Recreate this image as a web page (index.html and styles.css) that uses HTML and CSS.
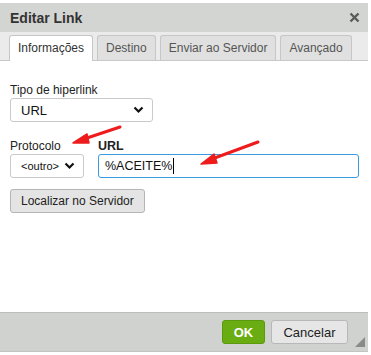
FILE: index.html
```html
<!DOCTYPE html>
<html lang="pt">
<head>
  <meta charset="UTF-8" />
  <title>Editar Link</title>
  <link rel="stylesheet" href="styles.css">
</head>
<body>
  <div class="dialog">
    <div class="title">
      <span>Editar Link</span>
      <svg class="close" width="11" height="11" viewBox="0 0 11 11"><path d="M1.5 1.5L9.5 9.5M9.5 1.5L1.5 9.5" stroke="#5a5a5a" stroke-width="2.4"/></svg>
    </div>
    <div class="tabs">
      <div class="tab active">Informações</div>
      <div class="tab">Destino</div>
      <div class="tab">Enviar ao Servidor</div>
      <div class="tab">Avançado</div>
    </div>
    <div class="content">
      <label class="lbl">Tipo de hiperlink</label>
      <div class="select wide">
        <span>URL</span>
        <svg width="11" height="8" viewBox="0 0 11 8"><path d="M1.5 1.5L5.5 5.5L9.5 1.5" fill="none" stroke="#111" stroke-width="2.2"/></svg>
      </div>
      <div class="row">
        <div class="col">
          <label class="lbl">Protocolo</label>
          <div class="select small">
            <span>&lt;outro&gt;</span>
            <svg width="11" height="8" viewBox="0 0 11 8"><path d="M1.5 1.5L5.5 5.5L9.5 1.5" fill="none" stroke="#111" stroke-width="2.2"/></svg>
          </div>
        </div>
        <div class="col grow">
          <label class="lbl bold">URL</label>
          <div class="input">%ACEITE%<span class="caret"></span></div>
        </div>
      </div>
      <button class="btn">Localizar no Servidor</button>
    </div>
    <div class="footer">
      <button class="ok">OK</button>
      <button class="cancel">Cancelar</button>
      <svg class="grip" width="10" height="10" viewBox="0 0 10 10"><path d="M10 0L10 10L0 10Z" fill="#8a8a8a"/></svg>
    </div>
  </div>

  <svg class="arrows" width="371" height="355" viewBox="0 0 371 355">
    <path d="M120 127L84 139" stroke="#ee1c1c" stroke-width="3" stroke-linecap="round"/>
    <path d="M73 143L87 134L89 143Z" fill="#ee1c1c" stroke="#ee1c1c" stroke-width="1.5" stroke-linejoin="round"/>
    <path d="M258 142L212 159" stroke="#ee1c1c" stroke-width="3" stroke-linecap="round"/>
    <path d="M201 164L214 154L217 163Z" fill="#ee1c1c" stroke="#ee1c1c" stroke-width="1.5" stroke-linejoin="round"/>
  </svg>
</body>
</html>
```

FILE: styles.css
```css
body {
  margin: 0;
  background: #fff;
  font-family: 'Liberation Sans', Arial, sans-serif;
  font-size: 12px;
  color: #222;
  position: relative;
}
.dialog {
  margin-top: 3px;
  width: 368px;
  height: 349px;
  display: flex;
  flex-direction: column;
  background: #fff;
}
.title {
  height: 29px;
  background: #d3d5d2;
  display: flex;
  align-items: center;
  justify-content: space-between;
  padding: 0 10px;
  font-size: 14px;
  font-weight: bold;
  color: #333;
}
.close {
  margin-right: -2px;
}
.tabs {
  height: 28px;
  background: #ebebeb;
  border-bottom: 1px solid #c9c9c9;
  display: flex;
  align-items: flex-end;
  padding-left: 9px;
  gap: 4px;
}
.tab {
  height: 24px;
  line-height: 24px;
  padding: 0 8px;
  white-space: nowrap;
  background: #e0e0e0;
  border: 1px solid #c6c6c6;
  border-bottom: none;
  border-radius: 3px 3px 0 0;
  color: #555;
  font-size: 12px;
}
.tab.active {
  background: #fff;
  color: #333;
  height: 25px;
  margin-bottom: -1px;
}
.content {
  flex: 1;
  padding: 22px 10px 0;
  display: flex;
  flex-direction: column;
  align-items: flex-start;
}
.lbl {
  display: block;
  font-size: 12px;
  color: #222;
  height: 14px;
  margin-bottom: 1px;
}
.lbl.bold {
  font-weight: bold;
  font-size: 12.5px;
}
.select {
  box-sizing: border-box;
  height: 24px;
  border: 1px solid #cacaca;
  border-radius: 3px;
  display: flex;
  align-items: center;
  justify-content: space-between;
  padding: 0 8px 0 10px;
  color: #111;
  font-size: 13px;
  background: #fff;
}
.select.wide {
  width: 143px;
}
.select.small {
  width: 74px;
  font-size: 11px;
}
.row {
  display: flex;
  gap: 14px;
  width: 349px;
  margin-top: 17px;
}
.col.grow {
  flex: 1;
}
.input {
  box-sizing: border-box;
  height: 24px;
  border: 1px solid #3a9be2;
  border-radius: 3px;
  padding: 0 6px;
  display: flex;
  align-items: center;
  font-size: 12.5px;
  color: #111;
}
.caret {
  width: 1px;
  height: 16px;
  background: #000;
  margin-left: 1px;
}
.btn {
  margin-top: 11px;
  height: 24px;
  padding: 0 10px;
  background: #e4e4e4;
  border: 1px solid #b5b5b5;
  border-radius: 3px;
  font-family: inherit;
  font-size: 12px;
  color: #222;
}
.footer {
  height: 38px;
  background: #d0d2cf;
  border-top: 1px solid #bdbdbd;
  border-bottom: 1px solid #c4c4c4;
  display: flex;
  align-items: center;
  justify-content: flex-end;
  padding-right: 2px;
  position: relative;
}
.ok, .cancel {
  height: 24px;
  border-radius: 3px;
  font-family: inherit;
  font-size: 13px;
}
.ok {
  width: 43px;
  background: #6aad12;
  border: 1px solid #5c9a0d;
  color: #fff;
  font-weight: bold;
}
.cancel {
  width: 77px;
  margin-left: 6px;
  margin-right: 18px;
  background: #e6e6e6;
  border: 1px solid #b8b8b8;
  color: #222;
}
.grip {
  position: absolute;
  right: 3px;
  bottom: 4px;
}
.arrows {
  position: absolute;
  left: 0;
  top: 0;
  pointer-events: none;
}
```
